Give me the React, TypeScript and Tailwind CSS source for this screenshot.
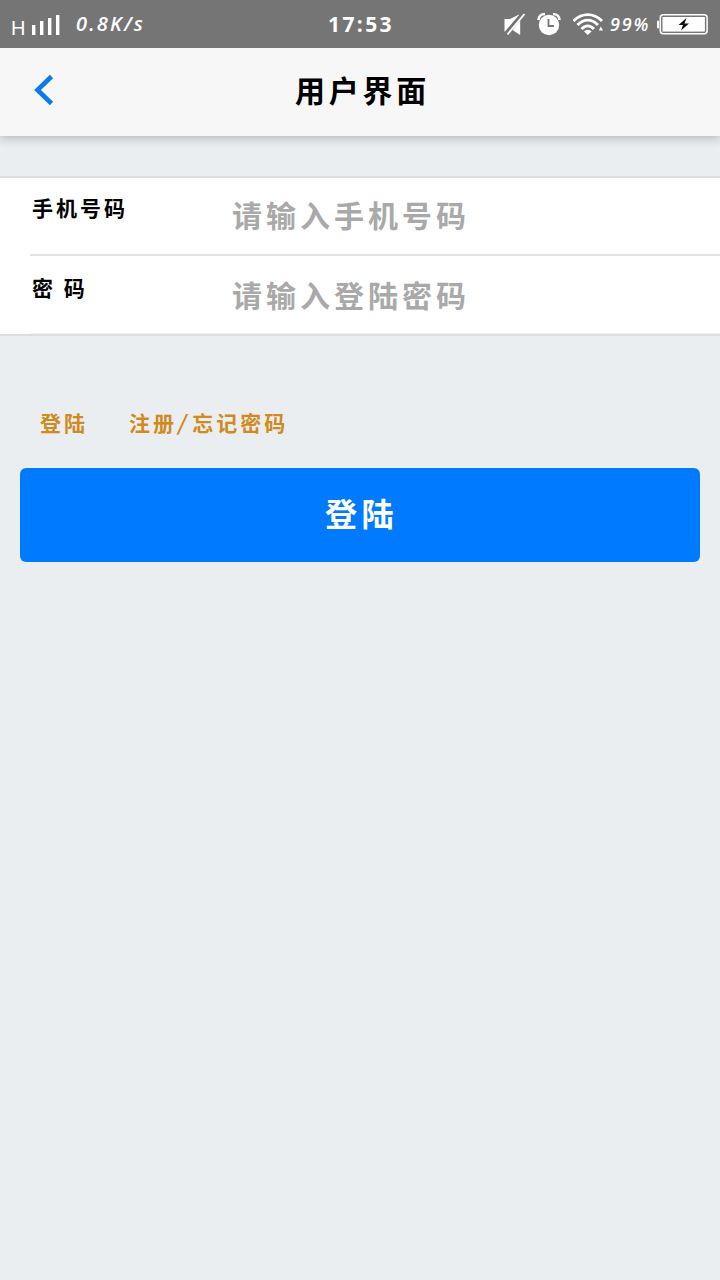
const fields = [
  { name: "phone", label: "手机号码", placeholder: "请输入手机号码", type: "tel" },
  { name: "password", label: "密 码", placeholder: "请输入登陆密码", type: "password" },
];

function SignalIcon() {
  return (
    <svg width="28" height="22" viewBox="0 0 28 22" fill="#fff" className="mt-[2px]">
      <rect x="0" y="11" width="3.4" height="10" />
      <rect x="8" y="7" width="3.4" height="14" />
      <rect x="16" y="4" width="3.4" height="17" />
      <rect x="24" y="1" width="3.4" height="20" />
    </svg>
  );
}

function MuteIcon() {
  return (
    <svg width="22" height="24" viewBox="0 0 22 24" fill="#fff">
      <path d="M0.500 7H6L15 2.500V3L0.500 20Z" />
      <path d="M16.200 8V23L8.500 18Z" />
      <path d="M3.500 22.300L20.500 2" stroke="#fff" strokeWidth="1.8" fill="none" />
    </svg>
  );
}

function AlarmIcon() {
  return (
    <svg width="24" height="24" viewBox="0 0 24 24" fill="none">
      <circle cx="12" cy="13" r="10.2" fill="#fff" />
      <path d="M1.500 8C1.500 4.300 4 2 8 2M22.500 8C22.500 4.300 20 2 16 2" stroke="#fff" strokeWidth="2.6" />
      <path d="M11.500 7V14H17" stroke="#757575" strokeWidth="1.8" />
    </svg>
  );
}

function WifiIcon() {
  return (
    <svg width="32" height="24" viewBox="0 0 32 24" fill="none" stroke="#fff" strokeWidth="2.900">
      <path d="M0.500 9C9 0.500 20.500 0.500 29 9" />
      <path d="M4.500 13C11 6.700 18.500 6.700 25 13" />
      <path d="M8.500 17C12.500 12.800 17 12.800 21 17" />
      <path d="M10.800 19.300Q14.800 16 18.700 19.300L14.800 23Z" fill="#fff" stroke="none" />
      <path d="M25.800 18.500L27.800 14.500L30 18.500Z" fill="#fff" stroke="none" />
    </svg>
  );
}

function BatteryIcon() {
  return (
    <svg width="51" height="21" viewBox="0 0 51 21">
      <rect x="0" y="6.500" width="2" height="8" rx="1" fill="#fff" />
      <rect x="3.300" y="0.800" width="46.800" height="19" rx="3" fill="none" stroke="#fff" strokeWidth="1.500" />
      <rect x="5.500" y="3" width="42.400" height="14.600" fill="#fff" />
      <path d="M29.500 4L21.500 11H26L24 16.500L32 9.500H27.500Z" fill="#111" />
    </svg>
  );
}

function StatusBar() {
  return (
    <div className="relative z-10 grid h-12 grid-cols-3 items-center bg-[#757575] text-white">
      <div className="flex items-center pl-[11px]">
        <span className="w-[21px] pt-[7px] font-['Liberation_Sans',sans-serif] text-[20px] leading-none">H</span>
        <SignalIcon />
        <span className="pl-[16px] font-['Open_Sans',sans-serif] text-[20px] leading-none font-semibold tracking-[2.200px] italic">
          0.8K/s
        </span>
      </div>
      <div className="pl-[2px] text-center font-['Open_Sans',sans-serif] text-[21px] leading-none font-bold tracking-[2.400px]">
        17:53
      </div>
      <div className="flex items-center justify-end pr-[12px]">
        <MuteIcon />
        <span className="pl-[11px]">
          <AlarmIcon />
        </span>
        <span className="pl-[12px]">
          <WifiIcon />
        </span>
        <span className="w-[52px] pl-[5px] font-['Open_Sans',sans-serif] text-[18px] leading-none font-semibold tracking-[1.800px] italic">
          99%
        </span>
        <BatteryIcon />
      </div>
    </div>
  );
}

function NavBar() {
  return (
    <header className="grid h-[88px] grid-cols-[1fr_auto_1fr] items-center bg-[#f7f7f7] pb-[5px] shadow-[0_2px_10px_rgba(0,0,0,0.25)]">
      <button type="button" aria-label="返回" className="pt-px pl-[34px]">
        <svg width="20" height="32" viewBox="0 0 20 32" fill="none" stroke="#0b7aea" strokeWidth="4.600">
          <path d="M17.500 2.500L3.500 16L17.500 29.500" />
        </svg>
      </button>
      <h1 className="pb-[2px] pl-[5px] text-[30px] leading-none font-bold tracking-[3.800px] text-black">用户界面</h1>
    </header>
  );
}

export default function App() {
  return (
    <div className="min-h-screen bg-[#ebeef1] font-['Noto_Sans_CJK_SC',sans-serif]">
      <StatusBar />
      <NavBar />

      <form>
        {/* Fields */}
        <div className="mt-10 border-y-2 border-[#dcdddf] bg-white">
          {fields.map((field) => (
            <label
              key={field.name}
              className="ml-[30px] flex h-20 border-b-2 border-[#e2e2e2] first:-mt-[2px] last:h-[78px] last:border-b last:border-[#f3f3f3]"
            >
              <span className="w-[202px] shrink-0 pt-[19px] pl-[2px] text-[21px] leading-[24px] font-bold tracking-[3px] text-black">
                {field.label}
              </span>
              <input
                name={field.name}
                type={field.type}
                placeholder={field.placeholder}
                className="h-[76px] min-w-0 flex-1 text-[30px] font-bold tracking-[4px] text-black outline-none placeholder:text-[#a9a9a9]"
              />
            </label>
          ))}
        </div>

        {/* Login / register switch */}
        <div className="mt-[74px] flex gap-[41px] pl-10 text-[21px] leading-[24px] font-bold tracking-[3px] text-[#d08a1e]">
          <a href="#login">登陆</a>
          <a href="#register">
            注册<span className="mr-[2px] ml-[2px] inline-block -skew-x-12">/</span>忘记密码
          </a>
        </div>

        <div className="px-5 pt-[34px]">
          <button
            type="submit"
            className="h-[94px] w-full rounded-[6px] bg-[#007aff] pb-[7px] pl-[3px] text-[32px] leading-none font-bold tracking-[4.500px] text-white"
          >
            登陆
          </button>
        </div>
      </form>
    </div>
  );
}
